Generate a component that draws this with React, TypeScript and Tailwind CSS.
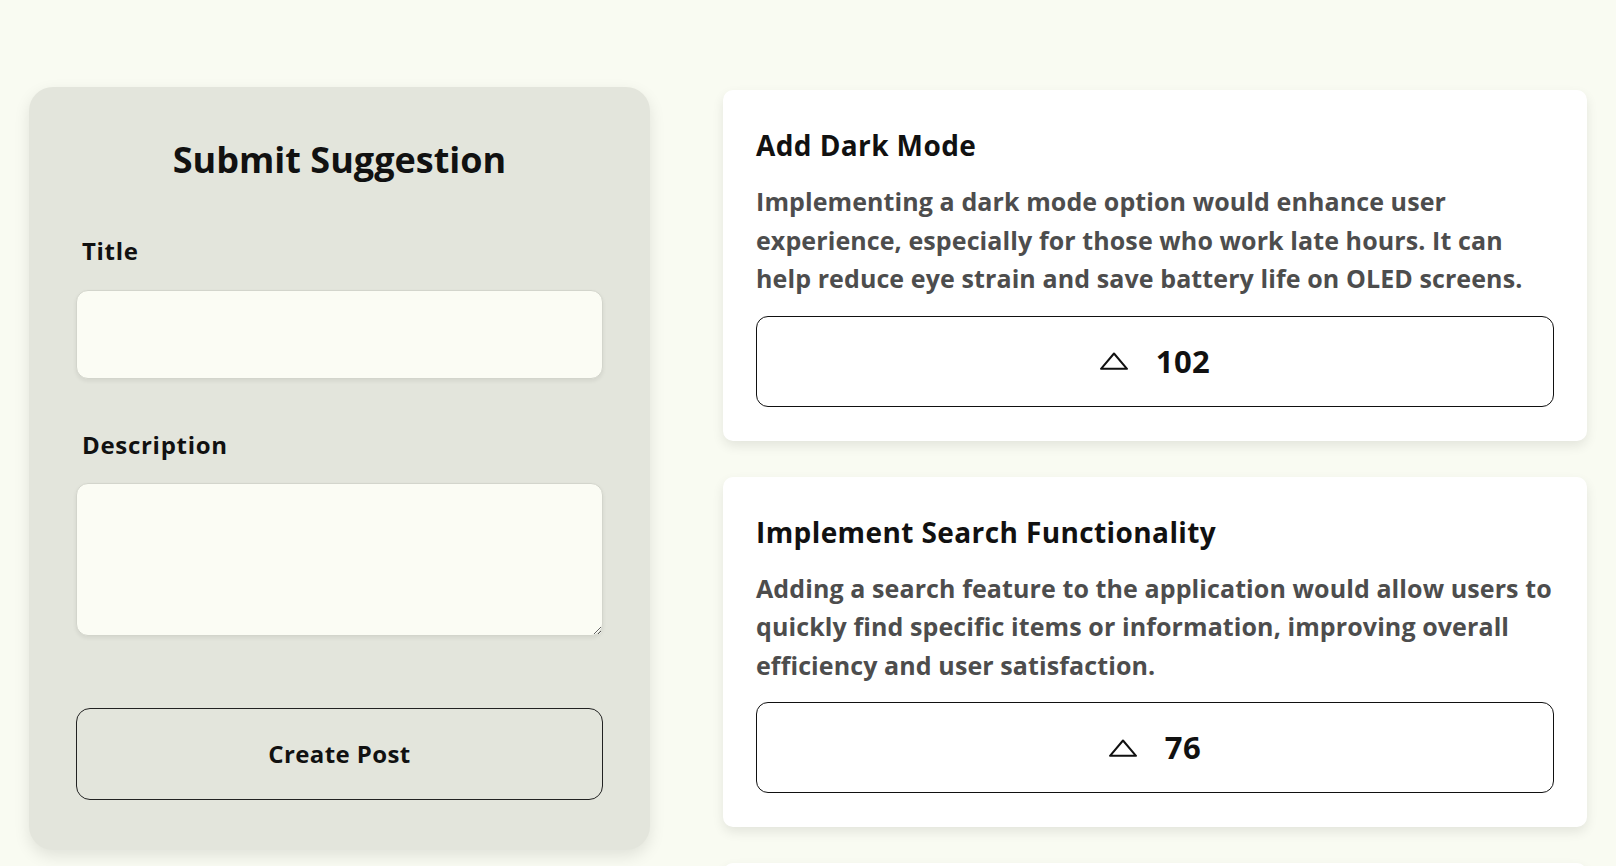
import React from 'react';

type Post = {
  title: string;
  body: string;
  votes: number;
};

const posts: Post[] = [
  {
    title: 'Add Dark Mode',
    body: 'Implementing a dark mode option would enhance user experience, especially for those who work late hours. It can help reduce eye strain and save battery life on OLED screens.',
    votes: 102,
  },
  {
    title: 'Implement Search Functionality',
    body: 'Adding a search feature to the application would allow users to quickly find specific items or information, improving overall efficiency and user satisfaction.',
    votes: 76,
  },
];

const UpvoteIcon = () => (
  <svg width="28" height="18" viewBox="0 0 28 18" fill="none" aria-hidden="true">
    <path
      d="M14 1.5 L27 16.8 H1 Z"
      stroke="#111111"
      strokeWidth="2"
      strokeLinejoin="round"
    />
  </svg>
);

const PostCard = ({ post }: { post: Post }) => (
  <div className="bg-white rounded-[10px] shadow-[0_5px_12px_rgba(0,0,0,0.09)] px-[33px] pt-[37px] pb-[34px]">
    <h2 className="text-[28px] leading-[36px] tracking-[0.4px] font-bold text-[#111111]">{post.title}</h2>
    <p className="mt-[19px] text-[25px] leading-[38.5px] tracking-[0.1px] font-bold text-[#4d4d4d]">{post.body}</p>
    <button className="mt-[18px] w-full h-[91px] flex items-center justify-center gap-[28px] rounded-[12px] border-[1.5px] border-[#111111] bg-white">
      <UpvoteIcon />
      <span className="text-[31px] tracking-[0.5px] font-bold text-[#111111]">{post.votes}</span>
    </button>
  </div>
);

export default function App() {
  return (
    <div className="min-h-screen bg-[#f9fbf2] font-['Open_Sans',sans-serif] flex gap-[73px] px-[29px] pt-[87px] overflow-hidden h-[866px]">
      {/* Form */}
      <div className="w-[621px] shrink-0 self-start rounded-[24px] bg-[#e3e5dc] shadow-[0_6px_16px_rgba(0,0,0,0.1)] px-[47px] pt-[50px] pb-[50px]">
        <h1 className="text-center text-[36px] leading-[46px] font-bold text-[#111111]">Submit Suggestion</h1>

        <label className="block mt-[53px] ml-[6px] text-[24px] leading-[30px] tracking-[0.7px] font-bold text-[#111111]">Title</label>
        <input
          type="text"
          className="mt-[24px] block w-full h-[89px] rounded-[12px] border border-[#d3d5cc] bg-[#fbfcf4] shadow-[0_2px_4px_rgba(0,0,0,0.07)] outline-none px-4"
        />

        <label className="block mt-[51px] ml-[6px] text-[24px] leading-[30px] tracking-[0.7px] font-bold text-[#111111]">Description</label>
        <textarea className="mt-[23px] block w-full h-[153px] rounded-[12px] border border-[#d3d5cc] bg-[#fbfcf4] shadow-[0_2px_4px_rgba(0,0,0,0.07)] outline-none px-4 py-3" />

        <button className="mt-[72px] w-full h-[92px] rounded-[14px] border-[1.5px] border-[#222222] bg-transparent text-[24px] tracking-[0.4px] font-bold text-[#111111]">
          Create Post
        </button>
      </div>

      {/* Posts */}
      <div className="flex-1 flex flex-col gap-[36px] pt-[3px]">
        {posts.map((post) => (
          <PostCard key={post.title} post={post} />
        ))}
        {/* next card, scrolled out of view */}
        <div className="shrink-0 h-[350px] bg-white rounded-[10px] shadow-[0_5px_12px_rgba(0,0,0,0.09)]" />
      </div>
    </div>
  );
}
